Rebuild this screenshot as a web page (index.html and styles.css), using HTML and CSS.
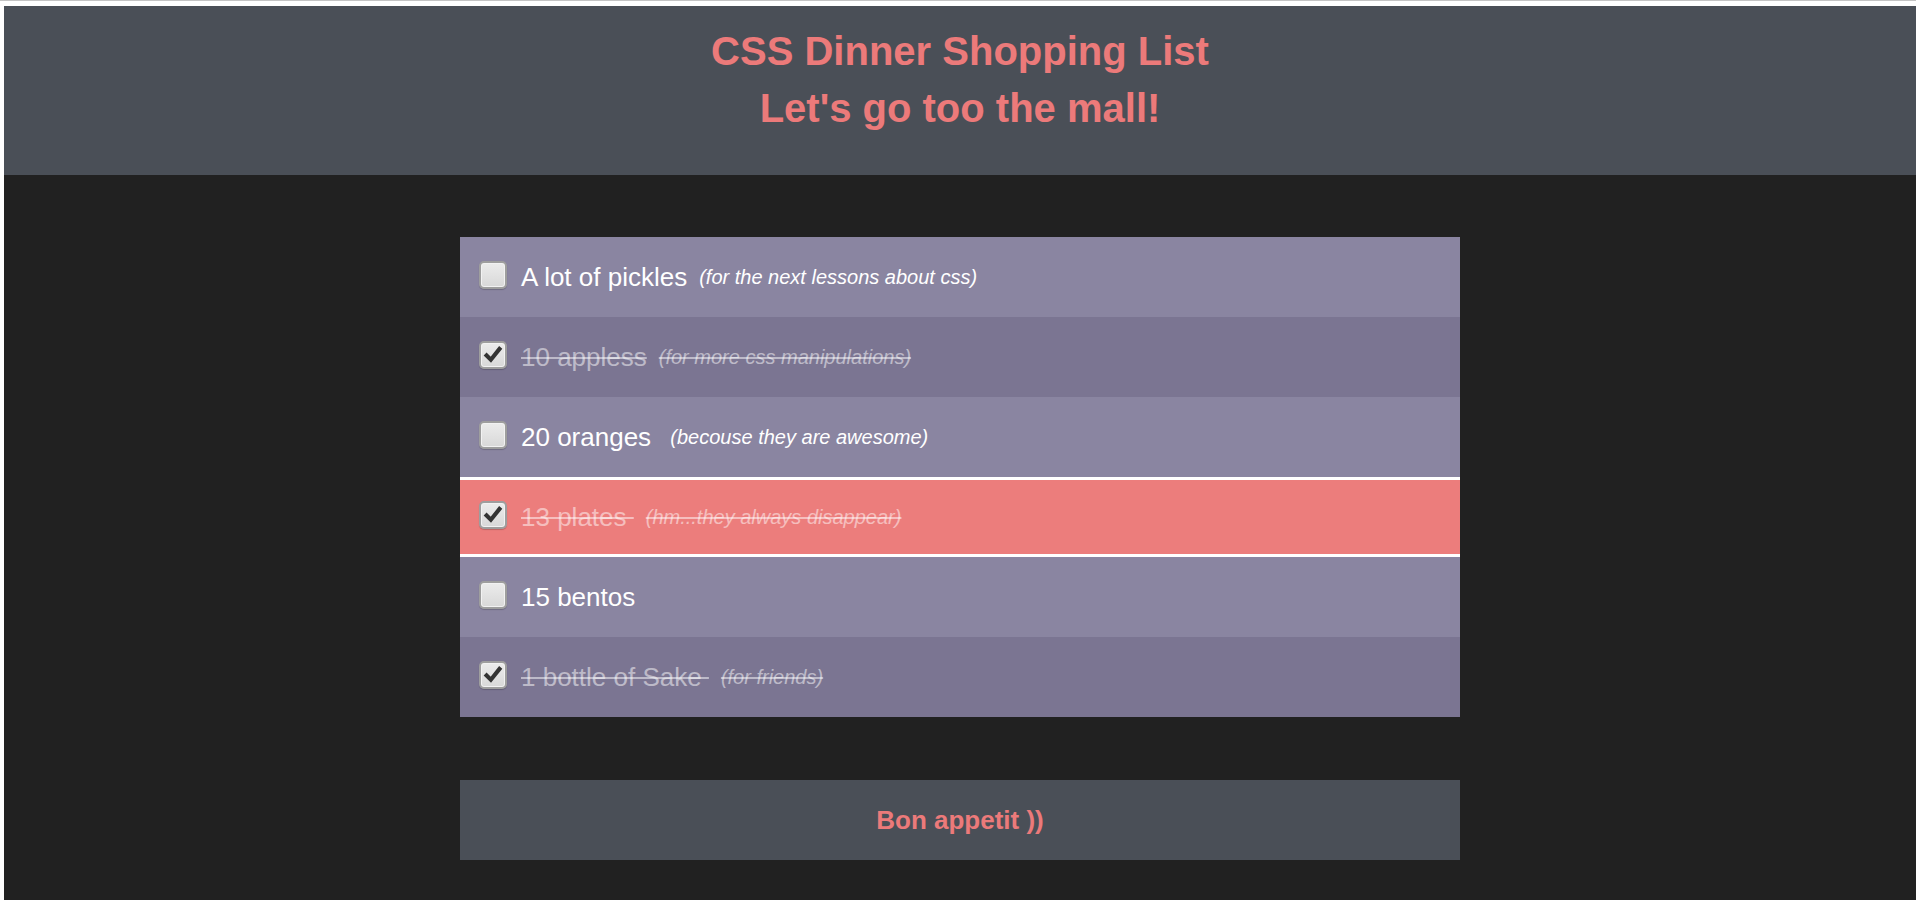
FILE: index.html
```html
<!DOCTYPE html>
<html lang="en">
<head>
<meta charset="utf-8">
<title>CSS Dinner Shopping List</title>
<link rel="stylesheet" href="styles.css">
</head>
<body>
<div class="page">
  <header class="header">
    <h1 class="title"><span class="title-line">CSS Dinner Shopping List</span><span class="title-line">Let's go too the mall!</span></h1>
  </header>
  <main class="content">
    <ul class="list">
      <li class="item">
        <span class="box"></span>
        <span class="name">A lot of pickles</span><em class="note">(for the next lessons about css)</em>
      </li>
      <li class="item done">
        <span class="box"><svg class="tick" viewBox="0 0 28 28"><path d="M6.5 14.5 L11.5 19.5 L21.5 7"/></svg></span>
        <span class="name">10 appless</span><em class="note">(for more css manipulations)</em>
      </li>
      <li class="item">
        <span class="box"></span>
        <span class="name">20 oranges </span><em class="note">(becouse they are awesome)</em>
      </li>
      <li class="item done hot">
        <span class="box"><svg class="tick" viewBox="0 0 28 28"><path d="M6.5 14.5 L11.5 19.5 L21.5 7"/></svg></span>
        <span class="name">13 plates </span><em class="note">(hm...they always disappear)</em>
      </li>
      <li class="item">
        <span class="box"></span>
        <span class="name">15 bentos</span>
      </li>
      <li class="item done">
        <span class="box"><svg class="tick" viewBox="0 0 28 28"><path d="M6.5 14.5 L11.5 19.5 L21.5 7"/></svg></span>
        <span class="name">1 bottle of Sake </span><em class="note">(for friends)</em>
      </li>
    </ul>
    <footer class="footer">Bon appetit ))</footer>
  </main>
</div>
</body>
</html>
```

FILE: styles.css
```css
html {
  background: #ffffff;
  border-top: 1px solid #c4c4c4;
}

body {
  margin: 5px 0 0 4px;
  font-family: "Liberation Sans", Arial, sans-serif;
}

.page {
  min-height: calc(100vh - 6px);
  background: #212121;
  display: flex;
  flex-direction: column;
}

.header {
  background: #4a4f57;
  padding: 17px 0 38px;
  text-align: center;
}

.title {
  margin: 0;
  font-size: 40px;
  font-weight: bold;
  line-height: 57px;
  color: #ec7a7a;
}

.title-line {
  display: block;
}

.content {
  padding-top: 62px;
  display: flex;
  flex-direction: column;
  align-items: center;
  gap: 63px;
}

.list {
  list-style: none;
  margin: 0;
  padding: 0;
  width: 1000px;
}

.item {
  box-sizing: border-box;
  height: 80px;
  display: flex;
  align-items: center;
  padding-left: 19px;
  background: #8a85a1;
  color: #ffffff;
  white-space: pre;
}

.item:nth-child(even) {
  background: #7b7592;
}

.item.hot {
  background: #ec7d7c;
  border-top: 3px solid #ffffff;
  border-bottom: 3px solid #ffffff;
}

.box {
  box-sizing: border-box;
  width: 28px;
  height: 28px;
  margin-right: 14px;
  margin-bottom: 4px;
  border: 2px solid #9e9e9e;
  border-radius: 5px;
  background: linear-gradient(#ececec, #d8d8d8);
  box-shadow: inset 0 0 0 1px #f2f2f2, 0 1px 1px rgba(0, 0, 0, 0.2);
  flex: none;
  display: flex;
  align-items: center;
  justify-content: center;
}

.tick {
  width: 26px;
  height: 26px;
  fill: none;
  stroke: #333333;
  stroke-width: 4.8;
  stroke-linecap: square;
  stroke-linejoin: miter;
}

.name {
  font-size: 26px;
}

.note {
  font-size: 20px;
  font-style: italic;
  margin-left: 12px;
}

.done .name,
.done .note {
  color: rgba(255, 255, 255, 0.5);
  text-decoration: line-through;
}

.footer {
  box-sizing: border-box;
  width: 1000px;
  height: 80px;
  background: #4a4f57;
  display: flex;
  align-items: center;
  justify-content: center;
  font-size: 26px;
  font-weight: bold;
  color: #ec7a7a;
}
```
